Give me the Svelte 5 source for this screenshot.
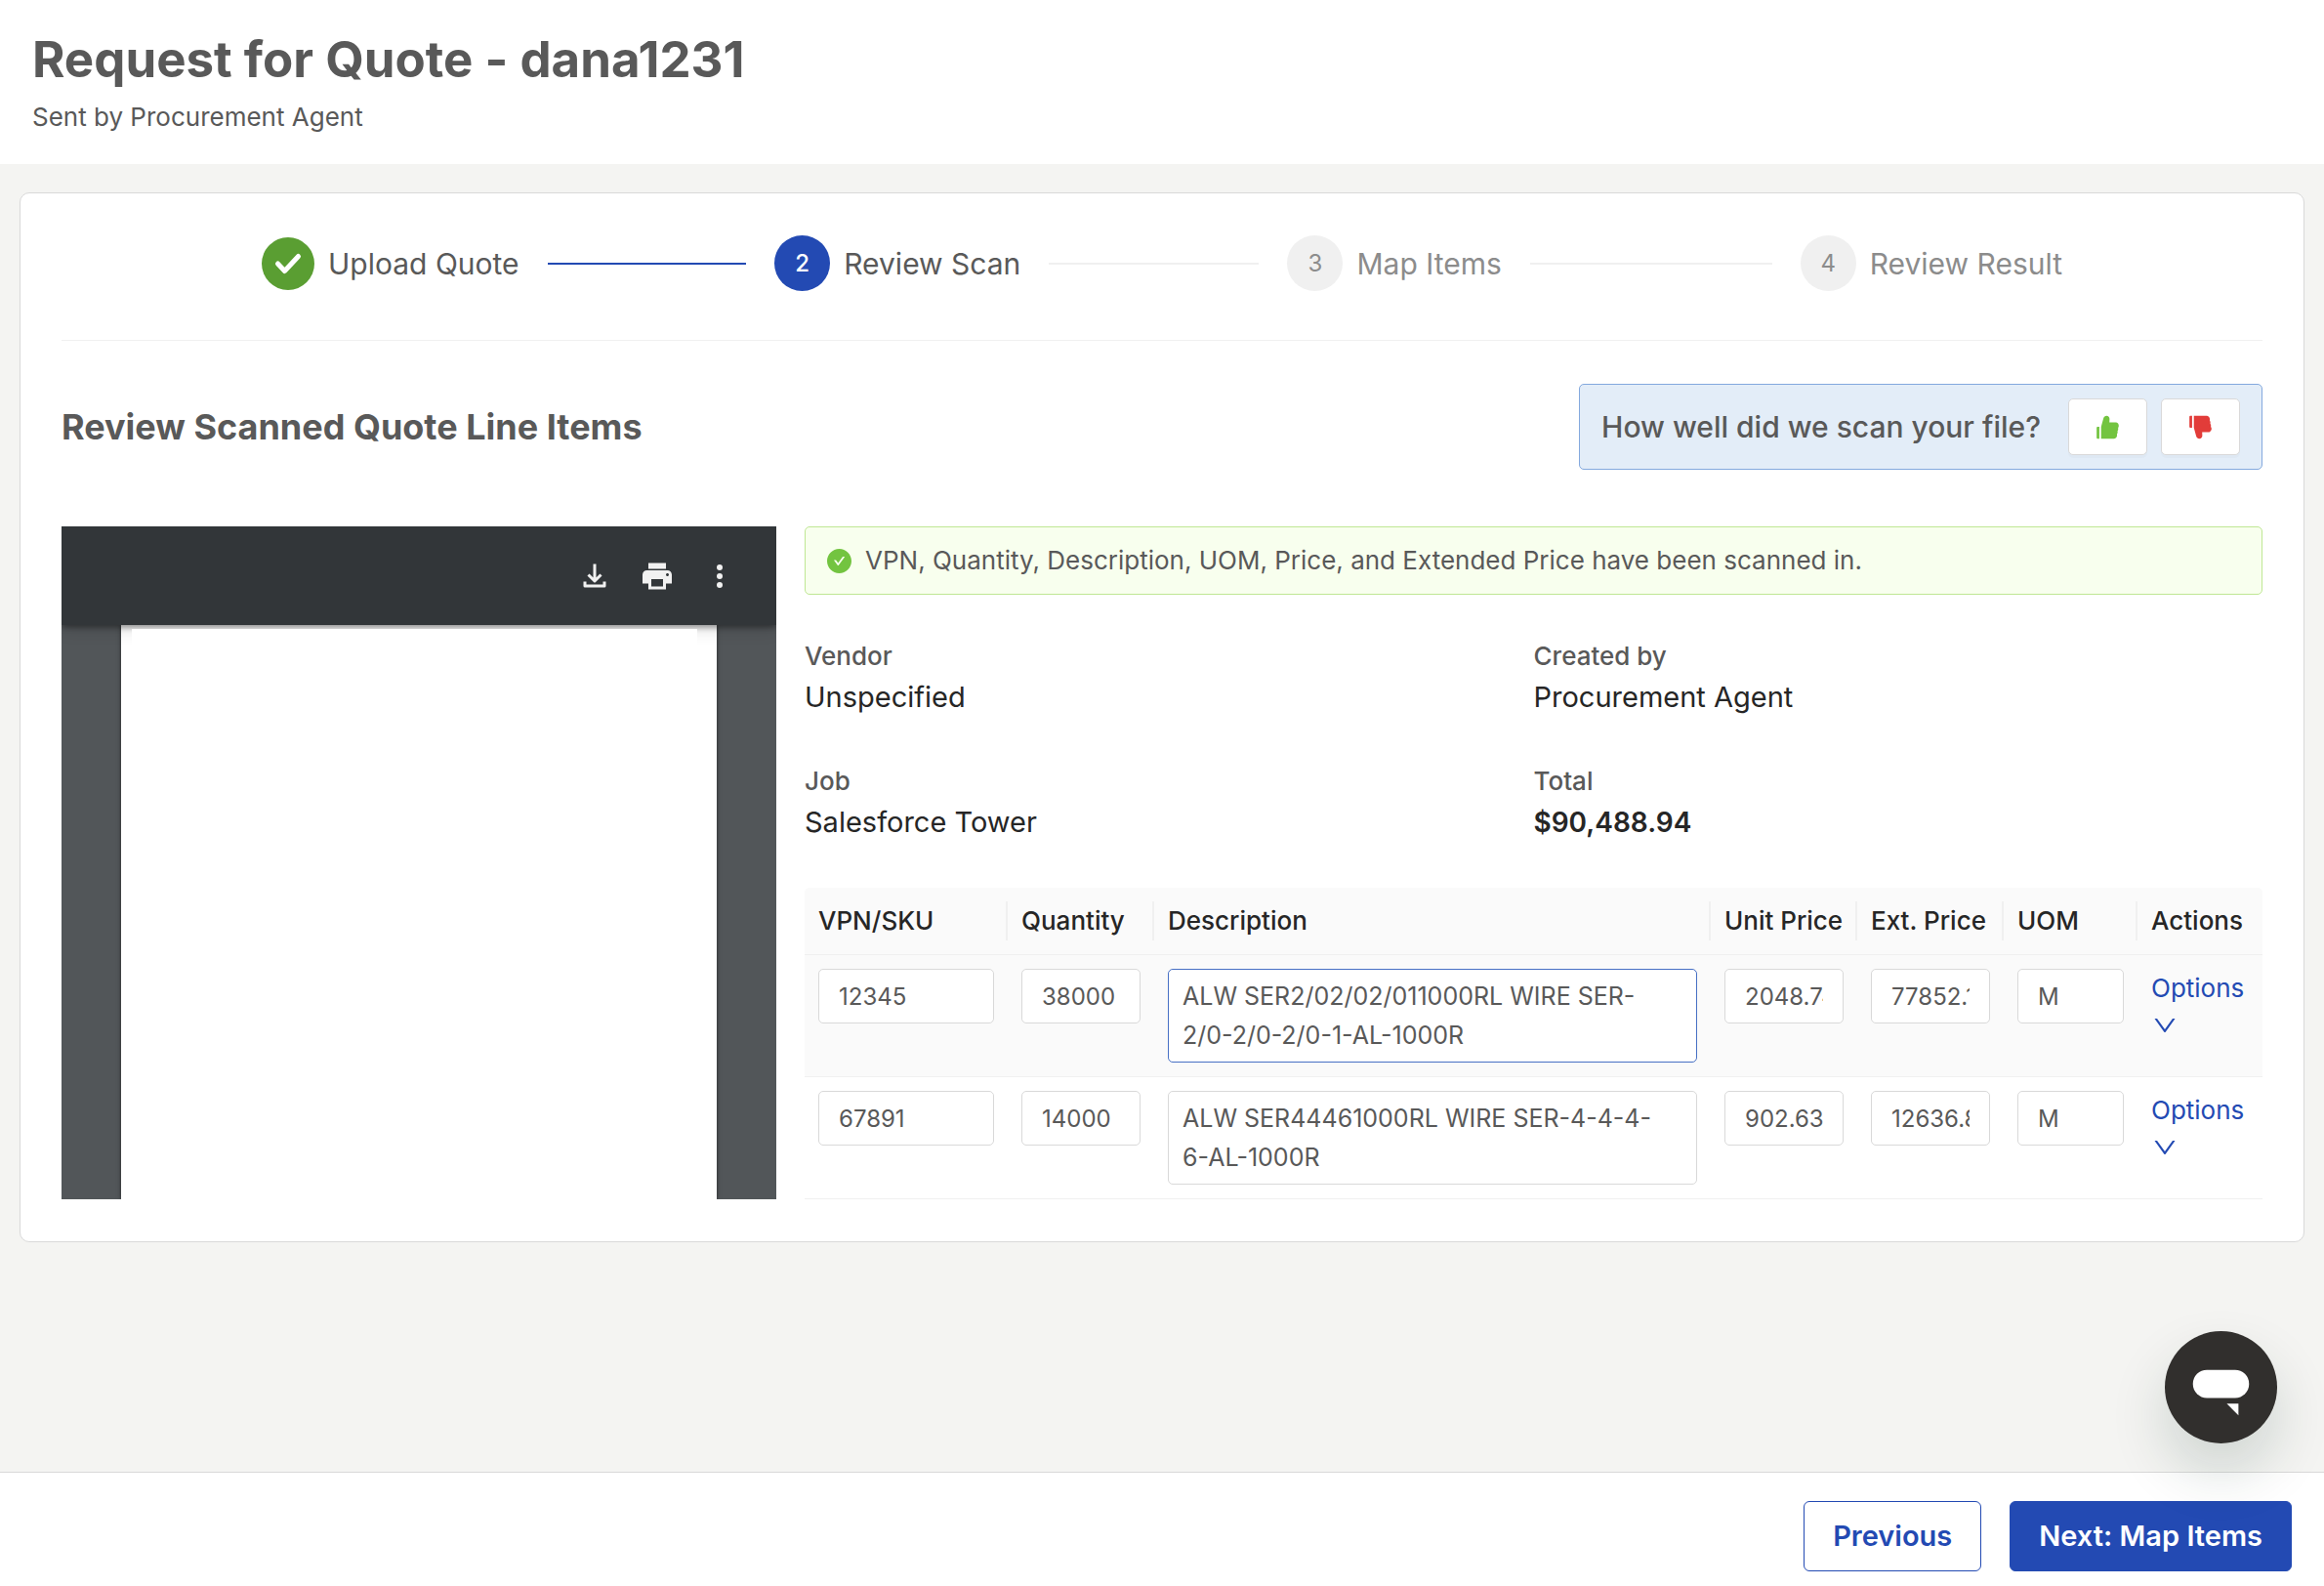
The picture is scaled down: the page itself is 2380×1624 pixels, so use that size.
<script>
  const steps = [
    { n: 1, label: 'Upload Quote', state: 'done' },
    { n: 2, label: 'Review Scan', state: 'active' },
    { n: 3, label: 'Map Items', state: 'wait' },
    { n: 4, label: 'Review Result', state: 'wait' }
  ];

  const details = [
    { label: 'Vendor', value: 'Unspecified' },
    { label: 'Created by', value: 'Procurement Agent' },
    { label: 'Job', value: 'Salesforce Tower' },
    { label: 'Total', value: '$90,488.94', strong: true }
  ];

  const columns = ['VPN/SKU', 'Quantity', 'Description', 'Unit Price', 'Ext. Price', 'UOM', 'Actions'];

  let items = $state([
    { sku: '12345', qty: '38000', desc: 'ALW SER2/02/02/011000RL WIRE SER-2/0-2/0-2/0-1-AL-1000R', unit: '2048.74', ext: '77852.12', uom: 'M', current: true },
    { sku: '67891', qty: '14000', desc: 'ALW SER44461000RL WIRE SER-4-4-4-6-AL-1000R', unit: '902.63', ext: '12636.82', uom: 'M', current: false }
  ]);
</script>

<div class="page">
  <header class="top">
    <h1>Request for Quote - dana1231</h1>
    <p>Sent by Procurement Agent</p>
  </header>

  <main>
    <section class="card">
      <ol class="steps">
        {#each steps as step, i}
          <li class="step {step.state}">
            <span class="badge">
              {#if step.state === 'done'}
                <svg viewBox="0 0 54 54" aria-hidden="true"><path d="M16.5 27l7 7.5L37.5 19.500" fill="none" stroke="#fff" stroke-width="5" stroke-linecap="round" stroke-linejoin="round" /></svg>
              {:else}
                {step.n}
              {/if}
            </span>
            <span class="step-label">{step.label}</span>
            {#if i < steps.length - 1}<span class="rail"></span>{/if}
          </li>
        {/each}
      </ol>

      <div class="heading-row">
        <h2>Review Scanned Quote Line Items</h2>
        <div class="feedback">
          <span>How well did we scan your file?</span>
          <div class="votes">
            <button class="vote up" aria-label="Scan was good">
              <svg viewBox="0 0 1024 1024"><path d="M885.9 533.7c16.8-22.2 26.1-49.4 26.1-77.7 0-44.9-25.1-87.4-65.5-111.1a67.67 67.67 0 00-34.3-9.3H572.4l6-122.9c1.4-29.7-9.1-57.9-29.5-79.4A106.62 106.62 0 00471 99.9c-52 0-98 35-111.8 85.1l-85.9 311h-.3v428h472.3c9.2 0 18.2-1.8 26.5-5.4 47.6-20.3 78.3-66.8 78.3-118.4 0-12.6-1.8-25-5.4-37 16.8-22.2 26.1-49.4 26.1-77.7 0-12.6-1.8-25-5.4-37 16.8-22.2 26.1-49.4 26.1-77.7-.2-12.6-2-25.1-5.6-37.1zM112 528v364c0 17.7 14.3 32 32 32h65V496h-65c-17.7 0-32 14.3-32 32z" /></svg>
            </button>
            <button class="vote down" aria-label="Scan was poor">
              <svg viewBox="0 0 1024 1024"><path d="M885.9 490.3c3.6-12 5.4-24.4 5.4-37 0-28.3-9.3-55.5-26.1-77.7 3.6-12 5.4-24.4 5.4-37 0-28.3-9.3-55.5-26.1-77.7 3.6-12 5.4-24.4 5.4-37 0-51.6-30.7-98.1-78.3-118.4a66.1 66.1 0 00-26.5-5.4H273v428h.3l85.8 310.8C372.9 889 418.9 924 470.9 924c29.7 0 57.4-11.8 77.9-33.4 20.5-21.5 31-49.7 29.5-79.4l-6-122.9h239.9c12.1 0 23.9-3.2 34.3-9.3 40.4-23.5 65.5-66.1 65.5-111 0-28.3-9.3-55.5-26.1-77.7zM112 132v364c0 17.7 14.3 32 32 32h65V100h-65c-17.7 0-32 14.3-32 32z" /></svg>
            </button>
          </div>
        </div>
      </div>

      <div class="columns">
        <div class="viewer">
          <div class="toolbar">
            <button aria-label="Download">
              <svg viewBox="0 0 36 36" fill="none" stroke="#f1f1f1" stroke-width="3"><path d="M18 5.500v17M11.500 16.500l6.500 6.500 6.500-6.500M8 23.500v4.500h20v-4.500" stroke-linejoin="round" /></svg>
            </button>
            <button aria-label="Print">
              <svg viewBox="0 0 24 24" fill="#f1f1f1"><path d="M19 8H5c-1.660 0-3 1.340-3 3v6h4v4h12v-4h4v-6c0-1.660-1.340-3-3-3zm-3 11H8v-5h8v5zm3-7c-.550 0-1-.450-1-1s.450-1 1-1 1 .450 1 1-.450 1-1 1zm-1-9H6v4h12V3z" /></svg>
            </button>
            <button aria-label="More actions">
              <svg viewBox="0 0 36 36" fill="#f1f1f1"><circle cx="18" cy="9" r="3" /><circle cx="18" cy="18" r="3" /><circle cx="18" cy="27" r="3" /></svg>
            </button>
          </div>
          <div class="canvas"><div class="sheet"><div class="sheet-body"></div></div></div>
        </div>

        <div class="scan">
          <div class="alert" role="status">
            <svg viewBox="64 64 896 896" aria-hidden="true"><path d="M512 64C264.6 64 64 264.6 64 512s200.6 448 448 448 448-200.6 448-448S759.4 64 512 64zm193.5 301.7l-210.6 292a31.8 31.8 0 01-51.7 0L318.5 484.9c-3.8-5.3 0-12.7 6.5-12.7h46.9c10.2 0 19.9 4.9 25.9 13.3l71.2 98.8 157.2-218c6-8.3 15.6-13.3 25.9-13.3H699c6.5 0 10.3 7.4 6.5 12.7z" /></svg>
            <span>VPN, Quantity, Description, UOM, Price, and Extended Price have been scanned in.</span>
          </div>

          <dl class="details">
            {#each details as d}
              <div>
                <dt>{d.label}</dt>
                <dd class:strong={d.strong}>{d.value}</dd>
              </div>
            {/each}
          </dl>

          <table>
            <colgroup>
              <col class="c-sku" /><col class="c-num" /><col /><col class="c-num" /><col class="c-num" /><col class="c-uom" /><col class="c-act" />
            </colgroup>
            <thead>
              <tr>
                {#each columns as c}<th scope="col"><span>{c}</span></th>{/each}
              </tr>
            </thead>
            <tbody>
              {#each items as item}
                <tr class:current={item.current}>
                  <td><input aria-label="VPN/SKU" bind:value={item.sku} /></td>
                  <td><input aria-label="Quantity" bind:value={item.qty} /></td>
                  <td><textarea aria-label="Description" rows="2" bind:value={item.desc}></textarea></td>
                  <td><input aria-label="Unit Price" bind:value={item.unit} /></td>
                  <td><input aria-label="Ext. Price" bind:value={item.ext} /></td>
                  <td><input aria-label="UOM" bind:value={item.uom} /></td>
                  <td>
                    <button class="options">
                      Options
                      <svg viewBox="0 0 1024 1024" aria-hidden="true"><path d="M884 256h-75c-5.1 0-9.9 2.500-12.9 6.600L512 654.2 227.9 262.600c-3-4.1-7.8-6.600-12.9-6.600h-75c-6.500 0-10.3 7.4-6.500 12.7l352.6 486.1c12.8 17.6 39 17.6 51.7 0l352.6-486.1c3.9-5.3.1-12.7-6.400-12.7z" /></svg>
                    </button>
                  </td>
                </tr>
              {/each}
            </tbody>
          </table>
        </div>
      </div>
    </section>
  </main>

  <footer>
    <button class="btn">Previous</button>
    <button class="btn primary">Next: Map Items</button>
  </footer>

  <button class="chat" aria-label="Open chat">
    <svg viewBox="0 0 116 116" fill="#fff"><rect x="29" y="40" width="58" height="29" rx="14.500" /><path d="M64 75h12v12z" /></svg>
  </button>
</div>

<style>
  :global(body) {
    background: #f4f4f2;
  }

  .page {
    min-height: 100vh;
    display: flex;
    flex-direction: column;
    font-family: Inter, "Liberation Sans", sans-serif;
    font-size: 26px;
    line-height: 40px;
    color: #595959;
  }

  .page * {
    box-sizing: border-box;
  }

  h1, h2, p, ol, dl, dd {
    margin: 0;
    padding: 0;
  }

  button, input, textarea {
    font: inherit;
    color: inherit;
  }

  button {
    padding: 0;
    border: 0;
    background: none;
    cursor: pointer;
  }

  svg {
    display: block;
  }

  .top {
    background: #fff;
    padding: 28px 33px;
  }

  h1 {
    font-size: 51px;
    line-height: 66px;
    font-weight: 700;
  }

  .top p {
    margin-top: 6px;
  }

  main {
    flex: 1;
    padding: 29px 20px;
  }

  .card {
    background: #fff;
    border: 1px solid #d9d9d9;
    border-radius: 10px;
    padding: 43px 42px;
  }

  .steps {
    list-style: none;
    display: flex;
    gap: 29px;
    padding: 0 205px 50px;
    border-bottom: 1px solid #f0f0f0;
  }

  .step {
    flex: 1;
    display: flex;
    align-items: center;
    font-size: 30px;
  }

  .step:last-child {
    flex: none;
  }

  .badge {
    width: 57px;
    height: 57px;
    border-radius: 50%;
    background: #f0f0f0;
    display: grid;
    place-items: center;
    font-size: 24px;
    margin-right: 14px;
  }

  .done .badge {
    width: 54px;
    height: 54px;
    background: #5a9e32;
  }

  .done .badge svg {
    width: 54px;
    height: 54px;
  }

  .active .badge {
    background: #234ab3;
    color: #fff;
    font-weight: 500;
  }

  .wait {
    color: #8c8c8c;
  }

  .rail {
    flex: 1;
    height: 2px;
    margin-left: 29px;
    background: #f0f0f0;
  }

  .done .rail {
    background: #234ab3;
  }

  .heading-row {
    display: flex;
    justify-content: space-between;
    align-items: center;
    margin: 44px 0 58px;
  }

  h2 {
    font-size: 36px;
    font-weight: 700;
  }

  .feedback {
    display: flex;
    align-items: center;
    gap: 28px;
    padding: 14px 22px;
    background: #e3edf8;
    border: 1px solid #84a9de;
    border-radius: 5px;
    font-size: 30px;
    font-weight: 500;
  }

  .votes {
    display: flex;
    gap: 14px;
  }

  .vote {
    width: 81px;
    height: 58px;
    display: grid;
    place-items: center;
    background: #fff;
    border: 1px solid #d9d9d9;
    border-radius: 5px;
    box-shadow: 0 3px 0 rgba(0, 0, 0, 0.02);
  }

  .vote svg {
    width: 29px;
    height: 29px;
  }

  .up {
    fill: #73c440;
  }

  .down {
    fill: #e23c39;
  }

  .columns {
    display: grid;
    grid-template-columns: minmax(0, 732fr) minmax(0, 1493fr);
    gap: 29px;
  }

  .viewer {
    display: flex;
    flex-direction: column;
    background: #525659;
    overflow: hidden;
  }

  .toolbar {
    position: relative;
    z-index: 1;
    height: 101px;
    padding-right: 26px;
    display: flex;
    justify-content: flex-end;
    align-items: center;
    background: #323639;
    box-shadow: 0 2px 6px rgba(0, 0, 0, 0.4), 0 4px 16px rgba(0, 0, 0, 0.15);
  }

  .toolbar button {
    width: 64px;
    height: 64px;
    display: grid;
    place-items: center;
  }

  .toolbar svg {
    width: 36px;
    height: 36px;
  }

  .canvas {
    flex: 1;
    display: flex;
    padding: 0 61px;
  }

  .sheet {
    flex: 1;
    display: flex;
    padding: 4px 20px 0 11px;
    background: #fff;
    box-shadow: 0 0 4px rgba(0, 0, 0, 0.6);
  }

  .sheet-body {
    position: relative;
    z-index: 2;
    flex: 1;
    background: #fff;
  }

  .alert {
    display: flex;
    align-items: center;
    gap: 14px;
    padding: 14px 22px;
    background: #f8ffee;
    border: 1px solid #bfe794;
    border-radius: 5px;
  }

  .alert svg {
    width: 25px;
    height: 25px;
    fill: #73c440;
  }

  .details {
    display: grid;
    grid-template-columns: 1fr 1fr;
    row-gap: 44px;
    margin: 43px 0 45px;
  }

  dt {
    font-weight: 500;
  }

  dd {
    font-size: 29px;
    line-height: 44px;
    color: #262626;
  }

  dd.strong {
    font-size: 28px;
    font-weight: 600;
  }

  table {
    width: 100%;
    table-layout: fixed;
    border-collapse: separate;
    border-spacing: 0;
  }

  .c-sku { width: 208px; }
  .c-num { width: 150px; }
  .c-uom { width: 137px; }
  .c-act { width: 128px; }

  th {
    padding: 14px 0;
    text-align: left;
    font-weight: 500;
    color: #262626;
    background: #fafafa;
    border-bottom: 1px solid #f0f0f0;
    white-space: nowrap;
  }

  th span {
    display: block;
    padding-left: 14px;
    border-right: 2px solid #f0f0f0;
  }

  th:first-child { border-top-left-radius: 5px; }
  th:last-child { border-top-right-radius: 5px; }
  th:last-child span { border-right: 0; }

  td {
    padding: 14px;
    vertical-align: top;
    border-bottom: 1px solid #f0f0f0;
  }

  .current td {
    background: #fafafa;
  }

  input, textarea {
    display: block;
    width: 100%;
    margin: 0;
    background: #fff;
    border: 1px solid #d9d9d9;
    border-radius: 5px;
    outline: none;
  }

  input {
    height: 56px;
    padding: 7px 20px;
    font-size: 24px;
  }

  textarea {
    height: 96px;
    padding: 7px 28px 7px 14px;
    font-size: 25px;
    resize: none;
    overflow: hidden;
  }

  .current textarea {
    border-color: #4770c4;
  }

  .options {
    text-align: left;
    color: #234ab3;
  }

  .options svg {
    width: 28px;
    height: 28px;
    margin-top: 4px;
    fill: #234ab3;
  }

  footer {
    display: flex;
    justify-content: flex-end;
    gap: 29px;
    padding: 29px 33px 15px;
    background: #fff;
    border-top: 1px solid #d9d9d9;
  }

  .btn {
    height: 72px;
    padding: 0 29px;
    border: 1px solid #234ab3;
    border-radius: 6px;
    background: #fff;
    color: #234ab3;
    font-size: 29px;
    font-weight: 600;
  }

  .primary {
    background: #234ab3;
    color: #fff;
  }

  .chat {
    position: fixed;
    right: 48px;
    bottom: 146px;
    width: 115px;
    height: 115px;
    border-radius: 50%;
    background: #312f2d;
    box-shadow: 0 29px 58px rgba(14, 51, 40, 0.16);
  }
</style>
